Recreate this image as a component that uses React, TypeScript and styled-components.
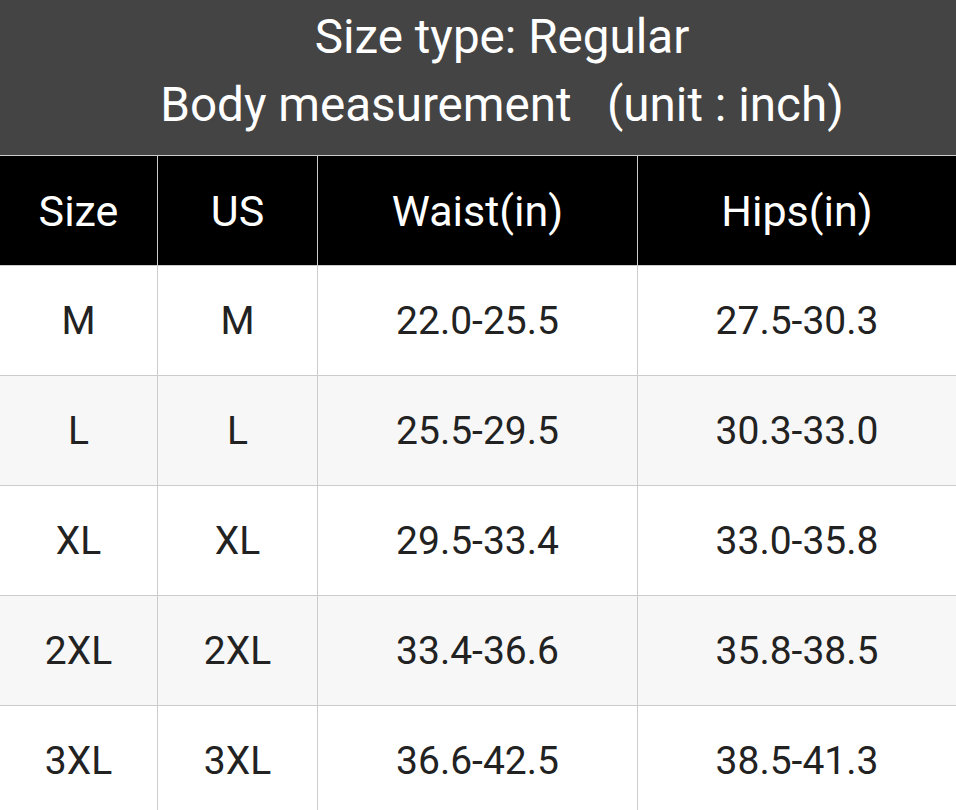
import React from 'react';
import styled, { createGlobalStyle } from 'styled-components';

const GlobalStyle = createGlobalStyle`
  html, body {
    margin: 0;
    padding: 0;
    background: #ffffff;
  }
  body {
    font-family: Roboto, "Liberation Sans", sans-serif;
  }
`;

const Page = styled.div`
  width: 956px;
  height: 810px;
  overflow: hidden;
`;

const Title = styled.header`
  background: #444444;
  color: #ffffff;
  text-align: center;
  padding: 3px 0 16px 48px;
  font-size: 47.6px;
  line-height: 68px;
  border-bottom: 1px solid #cccccc;
`;

const TitleLine = styled.div`
  white-space: pre;
`;

const Grid = styled.div`
  display: grid;
  grid-template-columns: 157px 160px 320px 1fr;
`;

const Cell = styled.div<{ $head?: boolean; $alt?: boolean; $first?: boolean }>`
  height: 109px;
  display: flex;
  align-items: center;
  justify-content: center;
  font-size: ${(p) => (p.$head ? '43px' : '39px')};
  color: ${(p) => (p.$head ? '#ffffff' : '#222222')};
  background: ${(p) => (p.$head ? '#000000' : p.$alt ? '#f7f7f7' : '#ffffff')};
  border-bottom: 1px solid #cccccc;
  border-left: ${(p) => (p.$first ? 'none' : '1px solid #cccccc')};
`;

const headers = ['Size', 'US', 'Waist(in)', 'Hips(in)'];

const rows = [
  ['M', 'M', '22.0-25.5', '27.5-30.3'],
  ['L', 'L', '25.5-29.5', '30.3-33.0'],
  ['XL', 'XL', '29.5-33.4', '33.0-35.8'],
  ['2XL', '2XL', '33.4-36.6', '35.8-38.5'],
  ['3XL', '3XL', '36.6-42.5', '38.5-41.3'],
];

const App: React.FC = () => {
  return (
    <Page>
      <GlobalStyle />
      <Title>
        <TitleLine>Size type: Regular</TitleLine>
        <TitleLine>Body measurement   (unit : inch)</TitleLine>
      </Title>
      <Grid>
        {headers.map((h, i) => (
          <Cell key={h} $head $first={i === 0}>
            {h}
          </Cell>
        ))}
        {rows.map((row, r) =>
          row.map((v, i) => (
            <Cell key={`${r}-${i}`} $alt={r % 2 === 1} $first={i === 0}>
              {v}
            </Cell>
          ))
        )}
      </Grid>
    </Page>
  );
};

export default App;
